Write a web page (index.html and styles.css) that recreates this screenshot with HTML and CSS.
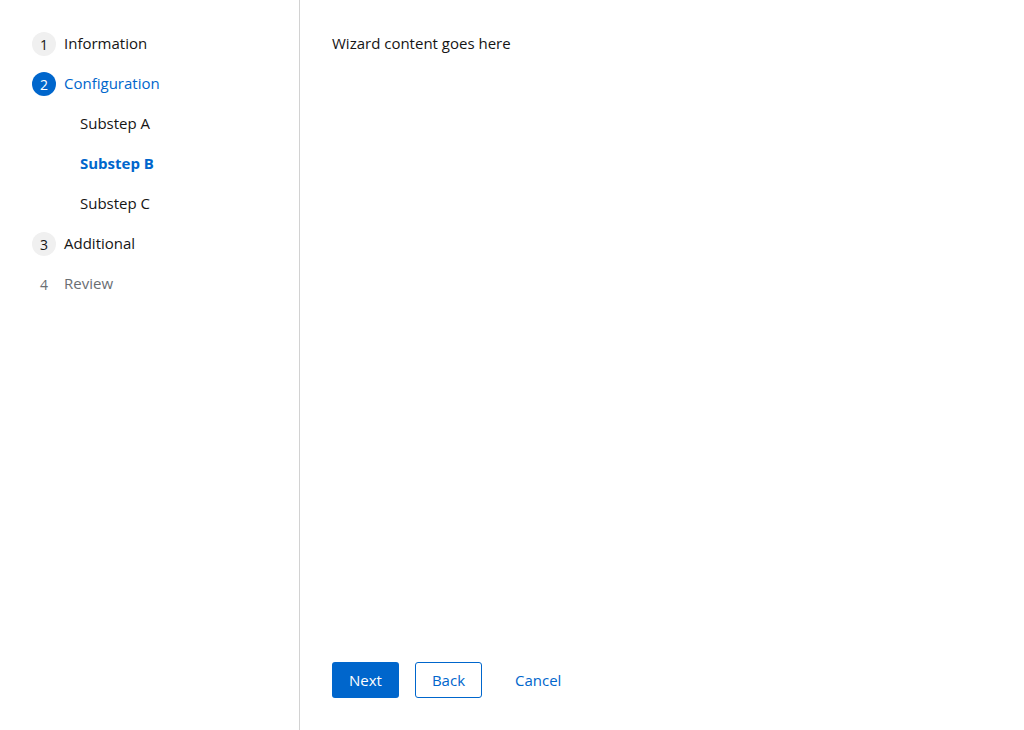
FILE: index.html
```html
<!DOCTYPE html>
<html>
<head>
<meta charset="utf-8">
<link rel="stylesheet" href="styles.css">
</head>
<body>
<div class="wizard">
  <nav class="nav">
    <ol class="steps">
      <li class="step"><span class="num">1</span><span class="label">Information</span></li>
      <li class="step current"><span class="num">2</span><span class="label">Configuration</span></li>
      <li class="sub"><span class="label">Substep A</span></li>
      <li class="sub current"><span class="label">Substep B</span></li>
      <li class="sub"><span class="label">Substep C</span></li>
      <li class="step"><span class="num">3</span><span class="label">Additional</span></li>
      <li class="step disabled"><span class="num">4</span><span class="label">Review</span></li>
    </ol>
  </nav>
  <main class="main">
    <div class="content">Wizard content goes here</div>
    <footer class="footer">
      <button class="btn primary">Next</button>
      <button class="btn secondary">Back</button>
      <button class="btn link">Cancel</button>
    </footer>
  </main>
</div>
</body>
</html>
```
FILE: styles.css
```css
html, body {
  margin: 0;
  height: 100%;
}
body {
  font-family: "Open Sans", "Liberation Sans", sans-serif;
  font-size: 15px;
  color: #151515;
  background: #fff;
}
.wizard {
  display: flex;
  height: 730px;
}
.nav {
  width: 300px;
  flex: none;
  border-right: 1px solid #d2d2d2;
  padding: 32px 0 0 32px;
  box-sizing: border-box;
}
.steps {
  list-style: none;
  margin: 0;
  padding: 0;
  display: flex;
  flex-direction: column;
  gap: 16px;
}
.step, .sub {
  display: flex;
  align-items: center;
  height: 24px;
}
.label {
  line-height: 22px;
  padding-bottom: 2px;
}
.num {
  width: 24px;
  height: 24px;
  border-radius: 50%;
  background: #f0f0f0;
  display: flex;
  align-items: center;
  justify-content: center;
  font-size: 14px;
  margin-right: 8px;
}
.step.current .num {
  background: #06c;
  color: #fff;
}
.step.current .label {
  color: #06c;
}
.step.disabled .num {
  background: transparent;
  color: #6a6e73;
}
.step.disabled .label {
  color: #6a6e73;
}
.sub {
  padding-left: 48px;
}
.sub.current .label {
  color: #06c;
  font-weight: 700;
}
.main {
  flex: 1;
  display: flex;
  flex-direction: column;
  padding: 31px 32px 32px;
}
.content {
  flex: 1;
  line-height: 24px;
}
.footer {
  display: flex;
  gap: 16px;
}
.btn {
  font-family: inherit;
  font-size: 15px;
  height: 36px;
  padding: 0 16px 1px;
  border-radius: 3px;
  border: 1px solid transparent;
  background: none;
  cursor: pointer;
}
.btn.primary {
  background: #06c;
  color: #fff;
}
.btn.secondary {
  border-color: #06c;
  color: #06c;
}
.btn.link {
  color: #06c;
}
```
